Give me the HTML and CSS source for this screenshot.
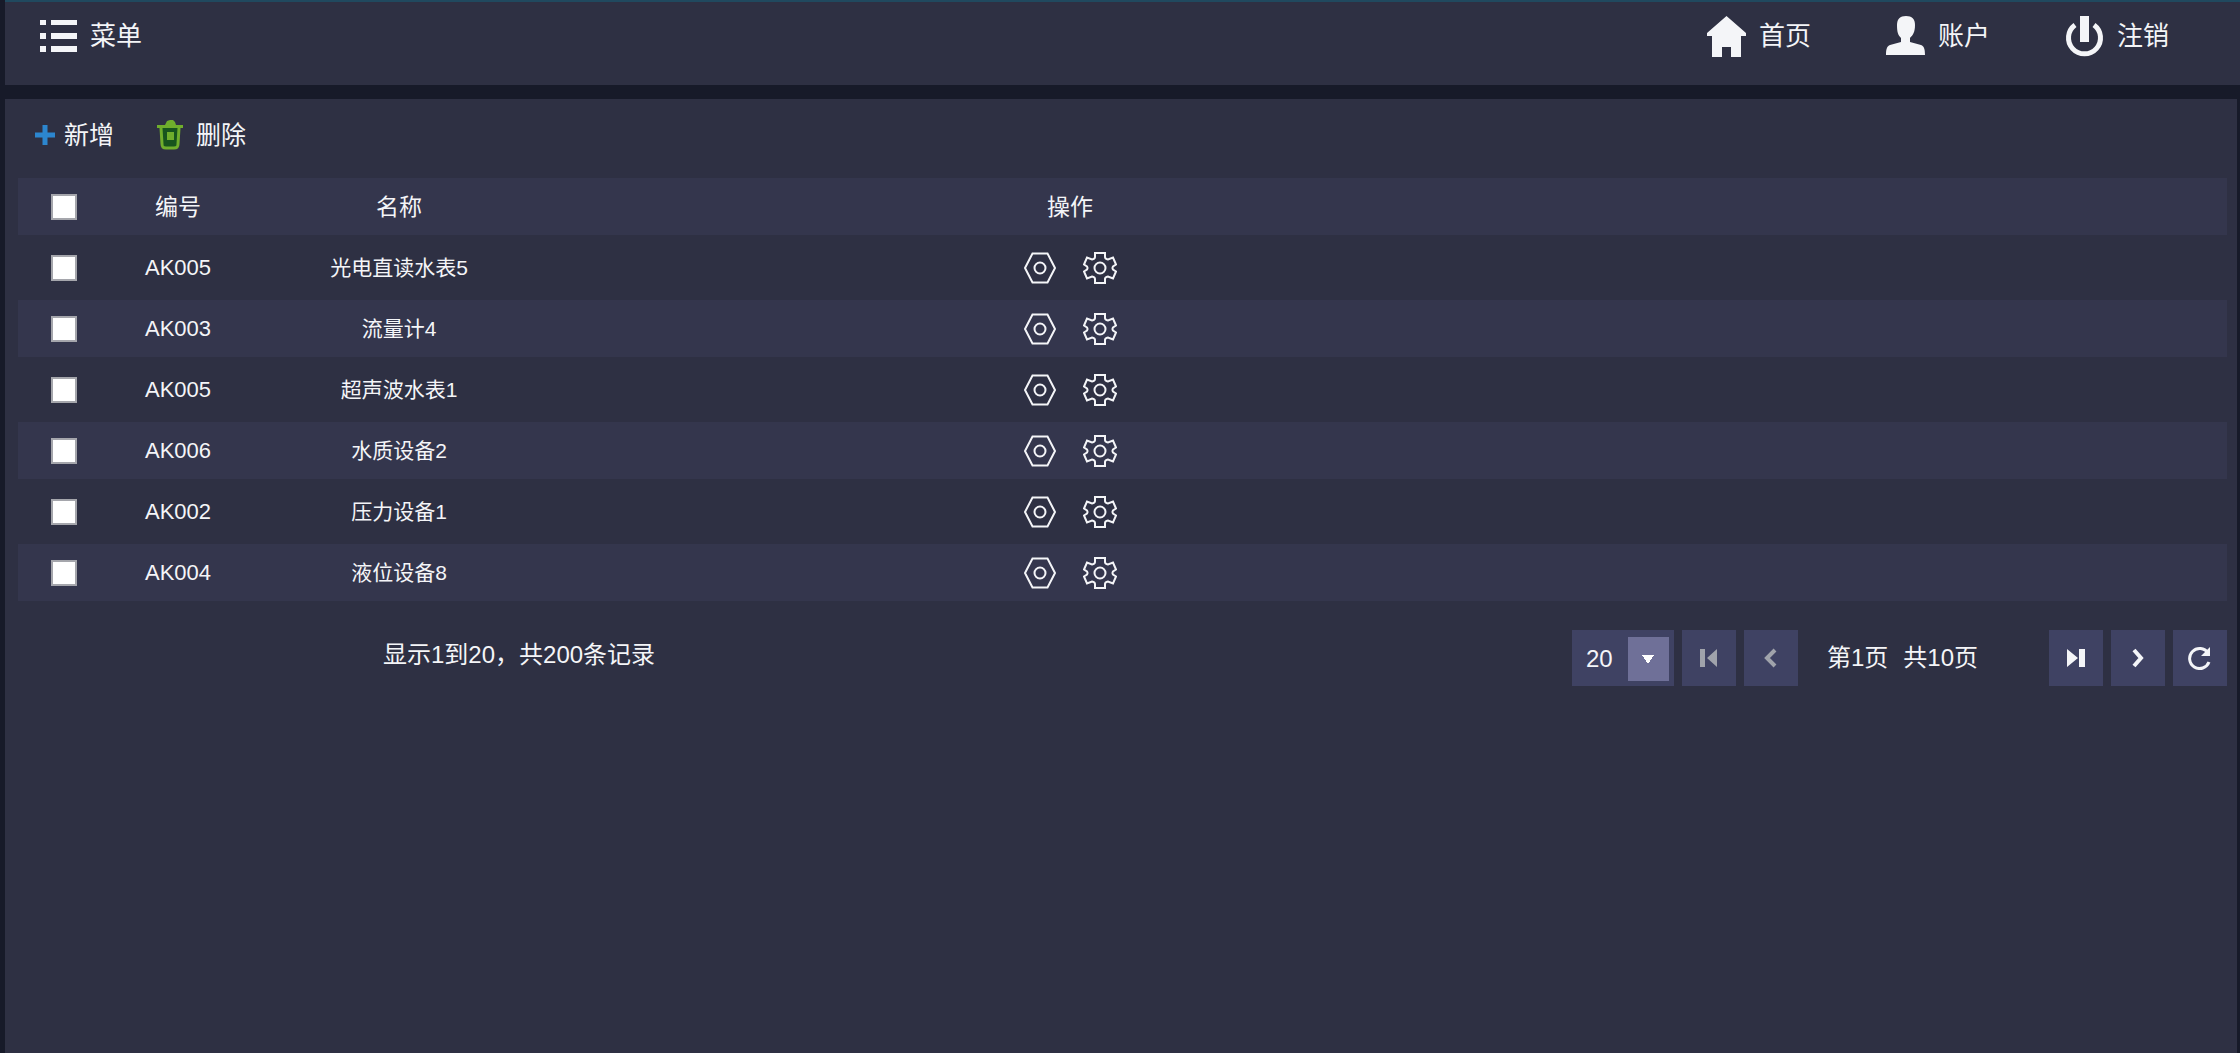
FILE: index.html
```html
<!DOCTYPE html>
<html lang="zh-CN">
<head>
    <meta charset="UTF-8">
    <meta name="viewport" content="width=device-width, initial-scale=1.0">
    <title>设备管理</title>
    <link rel="stylesheet" href="styles.css">
</head>
<body>
    <!-- Shared icons -->
    <svg class="sprite" aria-hidden="true">
        <symbol id="icon-view" viewBox="0 0 32 32">
            <path d="M8.5 1.5h15L31 16l-7.500 14.500h-15L1 16z"/>
            <circle cx="16" cy="16" r="5.500"/>
        </symbol>
        <symbol id="icon-gear" viewBox="0 0 34 34">
            <path d="M12 2h10v4q0 2 3 2.500l5-2 3 7-3 2q-1 1.500 0 3l3 2-3 7-5-2q-3 .5-3 2.500v4H12v-4q0-2-3-2.500l-5 2-3-7 3-2q1-1.500 0-3l-3-2 3-7 5 2q3-.5 3-2.500z"/>
            <circle cx="17" cy="17" r="5.500"/>
        </symbol>
    </svg>

    <header class="topbar">
        <button type="button" class="nav-item">
            <svg class="icon-menu" viewBox="0 0 37 32" aria-hidden="true">
                <path d="M0 0h6v5H0zM11 0h26v5H11zM0 13h6v6H0zM11 13h26v6H11zM0 26h6v6H0zM11 26h26v6H11z"/>
            </svg>
            <span>菜单</span>
        </button>
        <nav class="topnav">
            <a href="#" class="nav-item">
                <svg class="icon-nav" viewBox="0 0 39 41" aria-hidden="true">
                    <path d="M19.500 0L39 17v3h-5v21H24V31h-9v10H5V20H0v-3z"/>
                </svg>
                <span>首页</span>
            </a>
            <a href="#" class="nav-item">
                <svg class="icon-nav" viewBox="0 0 39 41" aria-hidden="true">
                    <path d="M20 0c6 0 9 3 9 9 0 7-2 10-5 13v4l11 3c3 1 4 4 4 10H0c0-6 1-9 4-10l11-3v-4c-3-3-4-6-4-13 0-6 3-9 9-9z"/>
                </svg>
                <span>账户</span>
            </a>
            <a href="#" class="nav-item">
                <svg class="icon-nav" viewBox="0 0 39 41" aria-hidden="true">
                    <path d="M15 0h9v26h-9z"/>
                    <path class="stroke" d="M10 9a16 16 0 1 0 19 0"/>
                </svg>
                <span>注销</span>
            </a>
        </nav>
    </header>

    <main class="panel">
        <div class="toolbar">
            <button type="button" class="tool-btn">
                <svg class="icon-add" viewBox="0 0 20 20" aria-hidden="true"><path d="M7.500 0h5v7.500H20v5h-7.500V20h-5v-7.500H0v-5h7.500z"/></svg>
                <span>新增</span>
            </button>
            <button type="button" class="tool-btn">
                <svg class="icon-delete" viewBox="0 0 26 30" aria-hidden="true">
                    <path d="M0 5h8l2-4 3-1h3l2 2 1 3h7v3H0z"/>
                    <path class="bin" d="M4 8l1 16c0 3 1 4 4 4h8c3 0 4-1 4-4l1-16"/>
                    <path d="M10 12h7v8h-7z"/>
                </svg>
                <span>删除</span>
            </button>
        </div>

        <table class="device-table">
            <thead>
                <tr>
                    <th class="col-check"><input type="checkbox" aria-label="全选"></th>
                    <th class="col-code">编号</th>
                    <th class="col-name">名称</th>
                    <th class="col-action">操作</th>
                    <th></th>
                </tr>
            </thead>
            <tbody id="deviceRows">
                <!-- Dynamically populated -->
            </tbody>
        </table>

        <footer class="pager">
            <p class="summary">显示1到20，共200条记录</p>
            <div class="page-size">
                <select aria-label="每页条数">
                    <option>20</option>
                    <option>50</option>
                    <option>100</option>
                </select>
            </div>
            <button type="button" class="page-btn" aria-label="第一页" disabled>
                <svg viewBox="0 0 20 20" aria-hidden="true"><path d="M1 1h5v18H1zM18 1v18L8 10z"/></svg>
            </button>
            <button type="button" class="page-btn" aria-label="上一页" disabled>
                <svg viewBox="0 0 20 20" aria-hidden="true"><path class="stroke" d="M14 2l-8 8 8 8"/></svg>
            </button>
            <p class="page-info"><span>第1页</span><span>共10页</span></p>
            <button type="button" class="page-btn" aria-label="最后一页">
                <svg viewBox="0 0 20 20" aria-hidden="true"><path d="M1 1l11 9-11 9zM13 1h6v18h-6z"/></svg>
            </button>
            <button type="button" class="page-btn" aria-label="下一页">
                <svg viewBox="0 0 20 20" aria-hidden="true"><path class="stroke" d="M6 2l7 8-7 8"/></svg>
            </button>
            <button type="button" class="page-btn" aria-label="刷新">
                <svg class="icon-refresh" viewBox="0 0 24 24" aria-hidden="true">
                    <path class="stroke" d="M20 7A10 10 0 1 0 21 16"/>
                    <path d="M22 1v9h-9z"/>
                </svg>
            </button>
        </footer>
    </main>

    <script>
        const devices = [
            { code: 'AK005', name: '光电直读水表5' },
            { code: 'AK003', name: '流量计4' },
            { code: 'AK005', name: '超声波水表1' },
            { code: 'AK006', name: '水质设备2' },
            { code: 'AK002', name: '压力设备1' },
            { code: 'AK004', name: '液位设备8' }
        ];

        document.getElementById('deviceRows').innerHTML = devices.map(device => `
            <tr>
                <td><input type="checkbox" aria-label="选择 ${device.name}"></td>
                <td class="code">${device.code}</td>
                <td class="name">${device.name}</td>
                <td>
                    <div class="actions">
                        <button type="button" aria-label="查看 ${device.name}"><svg class="icon-view"><use href="#icon-view"/></svg></button>
                        <button type="button" aria-label="设置 ${device.name}"><svg class="icon-gear"><use href="#icon-gear"/></svg></button>
                    </div>
                </td>
                <td></td>
            </tr>
        `).join('');
    </script>
</body>
</html>
```
FILE: styles.css
```css
:root {
    --page-bg: #171a29;
    --panel-bg: #2e3043;
    --row-bg: #34364d;
    --button-bg: #3f4263;
    --arrow-bg: #6f7098;
    --text-color: #f4f5f8;
    --muted-color: #a0a3ab;
}

* {
    margin: 0;
    padding: 0;
    box-sizing: border-box;
}

body {
    display: flex;
    flex-direction: column;
    gap: 14px;
    min-height: 100vh;
    padding-left: 5px;
    background-color: var(--page-bg);
    color: var(--text-color);
    font-family: "Liberation Sans", "Noto Sans CJK SC", sans-serif;
    font-size: 24px;
    line-height: 32px;
}

button,
select {
    border: none;
    background: none;
    color: inherit;
    font: inherit;
    cursor: pointer;
}

svg {
    display: block;
    fill: currentColor;
}

.stroke {
    fill: none;
    stroke: currentColor;
    stroke-width: 5;
}

.sprite {
    display: none;
}

/* Top bar */
.topbar {
    display: flex;
    justify-content: space-between;
    align-items: flex-start;
    height: 85px;
    padding: 12px 71px 0 35px;
    border-top: 2px solid #20495f;
    background-color: var(--panel-bg);
}

.topnav {
    display: flex;
    gap: 75px;
}

.nav-item {
    display: flex;
    align-items: center;
    gap: 13px;
    height: 44px;
    color: inherit;
    font-size: 26px;
    text-decoration: none;
}

.icon-menu {
    width: 37px;
    height: 32px;
}

.icon-nav {
    width: 39px;
    height: 41px;
}

/* Main panel */
.panel {
    flex: 1;
    margin-right: 3px;
    padding: 0 10px 0 13px;
    background-color: var(--panel-bg);
}

.toolbar {
    display: flex;
    gap: 43px;
    height: 79px;
    padding: 0 17px 8px;
}

.tool-btn {
    display: flex;
    align-items: center;
    gap: 9px;
    font-size: 25px;
}

.icon-add {
    width: 20px;
    height: 20px;
    color: #2c86cf;
}

.icon-delete {
    width: 26px;
    height: 30px;
    margin-right: 4px;
    color: #6fae2c;
}

.icon-delete .bin {
    fill: #17551d;
    stroke: currentColor;
    stroke-width: 3;
}

/* Table */
.device-table {
    width: 100%;
    table-layout: fixed;
    border-collapse: collapse;
    text-align: center;
}

.device-table th {
    font-size: 23px;
    font-weight: 400;
}

.device-table tr {
    height: 57px;
}

.device-table thead tr,
.device-table tbody tr:nth-child(even) {
    background-color: var(--row-bg);
}

.device-table tbody tr:nth-child(odd) {
    height: 65px;
}

.col-check {
    width: 91px;
}

.col-code {
    width: 138px;
}

.col-name {
    width: 304px;
}

.col-action {
    width: 47%;
}

.code {
    font-size: 22px;
}

.name {
    font-size: 21px;
}

input[type="checkbox"] {
    appearance: none;
    display: block;
    width: 26px;
    height: 26px;
    margin: 0 auto;
    border: 2px solid #a5a6ac;
    background-color: #fff;
    cursor: pointer;
}

input[type="checkbox"]:checked {
    background-color: #2c86cf;
}

.actions {
    display: flex;
    justify-content: center;
    align-items: center;
    gap: 27px;
}

.actions svg {
    fill: none;
    stroke: currentColor;
    stroke-width: 2;
}

.icon-view {
    width: 32px;
    height: 32px;
}

.icon-gear {
    width: 34px;
    height: 34px;
}

/* Pager */
.pager {
    display: flex;
    align-items: center;
    gap: 8px;
    padding-top: 29px;
}

.summary {
    margin-right: auto;
    padding: 0 0 6px 365px;
}

.page-size {
    position: relative;
    width: 102px;
    height: 56px;
    background-color: var(--button-bg);
}

.page-size select {
    appearance: none;
    width: 100%;
    height: 100%;
    padding: 2px 14px 0;
}

.page-size option {
    background-color: var(--button-bg);
}

/* Arrow box over the select */
.page-size::after {
    content: "";
    position: absolute;
    top: 7px;
    right: 5px;
    width: 41px;
    height: 44px;
    background:
        conic-gradient(from -34deg at 50% 100%, #fff 68deg, transparent 0) center / 12px 9px no-repeat,
        var(--arrow-bg);
    pointer-events: none;
}

.page-btn {
    display: grid;
    place-items: center;
    width: 54px;
    height: 56px;
    background-color: var(--button-bg);
}

.page-btn:disabled {
    color: var(--muted-color);
    cursor: default;
}

.page-btn svg {
    width: 20px;
    height: 20px;
}

.page-btn .stroke {
    stroke-width: 4;
}

.page-btn .icon-refresh {
    width: 24px;
    height: 24px;
}

.page-btn .icon-refresh .stroke {
    stroke-width: 3;
}

.page-info {
    display: flex;
    gap: 15px;
    padding: 0 63px 0 21px;
}
```
